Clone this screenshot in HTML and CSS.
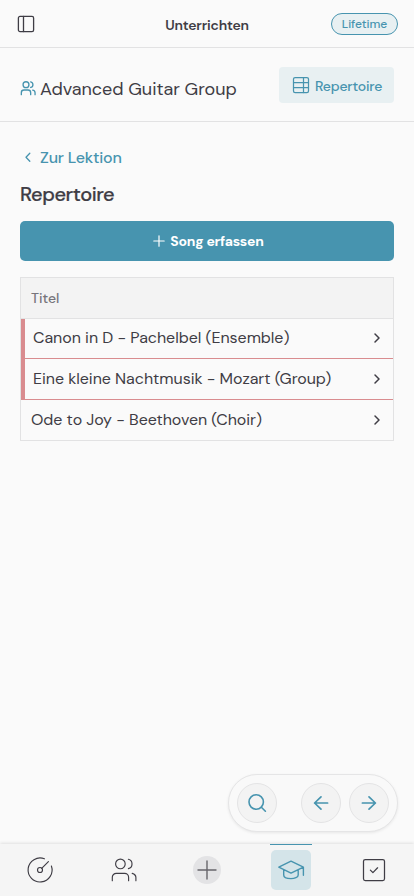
FILE: index.html
```html
<!DOCTYPE html>
<html lang="de">
<head>
<meta charset="utf-8">
<meta name="viewport" content="width=device-width, initial-scale=1">
<title>Unterrichten</title>
<link rel="stylesheet" href="styles.css">
</head>
<body>
<div class="app">
  <header class="topbar">
    <svg class="icon" width="20" height="20" viewBox="0 0 20 20"><rect x="2.4" y="2.4" width="15.2" height="15.2" rx="1.6"/><path d="M7.5 2.4v15.2"/></svg>
    <span class="topbar-title">Unterrichten</span>
    <span class="badge">Lifetime</span>
  </header>
  <section class="group">
    <svg class="icon teal" width="16" height="16" viewBox="0 0 24 24" stroke-width="2"><circle cx="9" cy="7" r="4.4"/><path d="M2 22v-3a4 4 0 0 1 4-4h6a4 4 0 0 1 4 4v3M16 2.8a4.3 4.3 0 0 1 0 8.4M19 15.2a4 4 0 0 1 3.6 3.8v3"/></svg>
    <h1>Advanced Guitar Group</h1>
    <a class="rep-button">
      <svg class="icon" width="18" height="18" viewBox="0 0 18 18" stroke-width="1.25"><rect x="1.5" y="1.5" width="15" height="15" rx="1.6"/><path d="M1.5 6.5h15M1.5 11.5h15M11.5 1.5v15"/></svg>
      <span>Repertoire</span>
    </a>
  </section>
  <main>
    <a class="back">
      <svg class="icon" width="16" height="16" viewBox="0 0 16 16" stroke-width="1.3"><path d="M9.8 4.2 6 8.2l3.8 4"/></svg>
      <span>Zur Lektion</span>
    </a>
    <h2>Repertoire</h2>
    <button class="primary">
      <svg class="icon" width="12" height="12" viewBox="0 0 12 12" stroke-width="1.2"><path d="M6 .8v10.4M.8 6h10.4"/></svg>
      <span>Song erfassen</span>
    </button>
    <div class="table">
      <div class="thead"><span>Titel</span></div>
      <div class="row marked"><span class="song">Canon in D - Pachelbel (Ensemble)</span><svg class="icon" width="16" height="16" viewBox="0 0 16 16" stroke-width="1.5"><path d="m6 4 4 4-4 4"/></svg></div>
      <div class="row marked"><span class="song">Eine kleine Nachtmusik - Mozart (Group)</span><svg class="icon" width="16" height="16" viewBox="0 0 16 16" stroke-width="1.5"><path d="m6 4 4 4-4 4"/></svg></div>
      <div class="row"><span class="song">Ode to Joy - Beethoven (Choir)</span><svg class="icon" width="16" height="16" viewBox="0 0 16 16" stroke-width="1.5"><path d="m6 4 4 4-4 4"/></svg></div>
    </div>
  </main>
  <div class="floating">
    <button class="round search"><svg class="icon" width="20" height="20" viewBox="0 0 20 20" stroke-width="1.6"><circle cx="9.2" cy="9" r="7.2"/><path d="m14.4 14.2 4 4"/></svg></button>
    <button class="round"><svg class="icon" width="20" height="20" viewBox="0 0 20 20" stroke-width="1.7"><path d="M16.6 10H3.6M10 3.8 3.6 10l6.4 6.2"/></svg></button>
    <button class="round"><svg class="icon" width="20" height="20" viewBox="0 0 20 20" stroke-width="1.7"><path d="M3.4 10h13M10 3.8l6.4 6.2-6.4 6.2"/></svg></button>
  </div>
  <nav class="tabs">
    <a class="tab"><svg class="icon" width="28" height="28" viewBox="0 0 28 28" stroke-width="1.15"><path d="M18.4 2.8A12 12 0 1 0 25.4 10M15.7 12.3 22.4 5.6"/><circle cx="14" cy="14" r="2.5"/></svg></a>
    <a class="tab"><svg class="icon" width="28" height="28" viewBox="0 0 28 28" stroke-width="1.15"><circle cx="10.4" cy="7.9" r="4.8"/><path d="M2.3 24.7v-3.4a4 4 0 0 1 4-4h8.3a4 4 0 0 1 4 4v3.4M18.4 3.3a4.8 4.8 0 0 1 0 9.3M22.2 17.4c2.4.7 3.7 2.1 3.7 4.2v3.1"/></svg></a>
    <a class="tab"><span class="add"><svg class="icon" width="28" height="28" viewBox="0 0 28 28" stroke-width="1.4"><path d="M14 5v18M5 14h18"/></svg></span></a>
    <a class="tab current"><span class="tile"><svg class="icon" width="28" height="28" viewBox="0 0 28 28" stroke-width="1.4"><path d="M1.8 11.2 14 5.2l12.4 6L14 17.1zM26.4 11.2v8M6.7 14v5c0 4.8 14.5 4.8 14.5 0v-5"/></svg></span></a>
    <a class="tab"><svg class="icon" width="28" height="28" viewBox="0 0 28 28" stroke-width="1.25"><rect x="3.5" y="3.5" width="21" height="21" rx="1.8"/><path d="m10.4 14.1 2.5 2.5 4.7-4.8"/></svg></a>
  </nav>
</div>
</body>
</html>
```
FILE: styles.css
```css
* { box-sizing: border-box; }
body { margin: 0; background: #fafafa; color: #3f3d45; font-family: "DM Sans", Inter, sans-serif; }
h1, h2 { margin: 0; font-weight: 400; }
span, h1, h2 { white-space: nowrap; }
button { border: 0; padding: 0; font: inherit; }
.app { height: 896px; display: flex; flex-direction: column; overflow: hidden; }
.icon { display: block; flex: none; fill: none; stroke: currentColor; stroke-linecap: round; stroke-linejoin: round; }
.teal { color: #4794af; }
.topbar { height: 48px; flex: none; display: grid; grid-template-columns: 1fr auto 1fr; align-items: center; padding: 0 16px; border-bottom: 1px solid #e2e2e3; }
.topbar .icon { stroke-width: 1.3; }
.topbar-title { font-size: 14px; font-weight: 600; line-height: 20px; padding-top: 3px; letter-spacing: -.2px; }
.badge { justify-self: end; width: 67px; height: 22px; border: 1px solid #4794af; border-radius: 11px; background: #e8f0f2; color: #4794af; text-align: center; font-size: 12px; font-weight: 500; line-height: 20px; letter-spacing: -.05px; }
.group { height: 74px; flex: none; display: flex; align-items: center; padding: 0 20px; border-bottom: 1px solid #e2e2e3; }
.group > .icon { margin-top: 6px; }
.group h1 { margin: 9px 0 0 4px; font-size: 18px; line-height: 26px; letter-spacing: -.03px; }
.rep-button { margin: 1px 0 0 auto; width: 115px; height: 36px; display: flex; align-items: center; gap: 5px; padding: 0 0 0 13px; border-radius: 4px; background: #e8f0f2; color: #4794af; font-size: 14px; font-weight: 500; letter-spacing: -.2px; }
.rep-button span { padding-top: 2px; }
main { padding: 23px 20px 0; flex: 1; }
.back { height: 24px; display: flex; align-items: center; gap: 4px; color: #4794af; font-size: 16px; font-weight: 500; letter-spacing: -.2px; }
h2 { height: 28px; margin-top: 11px; font-size: 20px; font-weight: 500; line-height: 28px; letter-spacing: -.45px; -webkit-text-stroke: .2px currentColor; }
.primary { width: 100%; height: 40px; margin-top: 13px; display: flex; align-items: center; justify-content: center; gap: 5px; padding-left: 3px; border-radius: 5px; background: #4794af; color: #fff; font-size: 14px; font-weight: 700; letter-spacing: -.25px; }
.table { height: 164px; margin-top: 16px; border: 1px solid #e2e2e3; }
.thead { height: 41px; padding: 0 10px; border-bottom: 1px solid #e2e2e3; background: #f3f3f3; color: #77757b; font-size: 14px; font-weight: 500; line-height: 40px; }
.row { height: 40px; display: flex; align-items: center; justify-content: space-between; padding: 0 8px 0 10px; font-size: 16px; line-height: 24px; }
.row.marked { height: 41px; border-left: 4px solid #d98c8f; border-bottom: 1px solid #d98c8f; padding-left: 8px; }
.thead + .row.marked { height: 40px; padding-bottom: 1px; }
.song { letter-spacing: -.035px; }
.floating { width: 170px; height: 58px; flex: none; align-self: flex-end; margin: 0 16px 12px; display: flex; align-items: center; justify-content: flex-end; gap: 8px; padding: 0 8px; border: 1px solid #e5e5e6; border-radius: 29px; background: #f9f9f9; box-shadow: 0 1px 3px #00000014; }
.round { width: 40px; height: 40px; display: grid; place-items: center; border: 1px solid #e4e4e5; border-radius: 50%; background: #f3f3f3; color: #4794af; }
.search { margin-right: auto; }
.tabs { height: 52px; flex: none; display: flex; justify-content: space-between; padding: 0 19px; background: #f5f5f5; box-shadow: 0 -1px 3px #0000001c; }
.tab { width: 42px; display: grid; place-items: center; }
.tab.current { border-top: 1px solid #4794af; color: #4794af; padding-bottom: 1px; }
.add { width: 28px; height: 28px; display: grid; place-items: center; border-radius: 50%; background: #e3e3e5; color: #67656b; }
.tile { width: 40px; height: 40px; display: grid; place-items: center; border-radius: 5px; background: #d4e4e9; }
```
